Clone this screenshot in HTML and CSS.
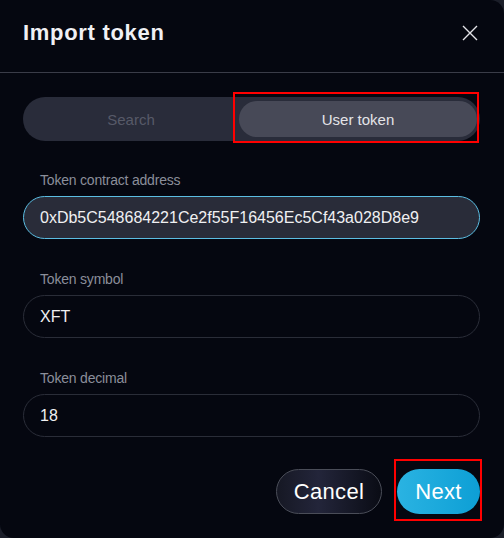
FILE: index.html
```html
<!DOCTYPE html>
<html>
<head>
<meta charset="utf-8">
<link rel="stylesheet" href="styles.css">
</head>
<body>
<div class="modal">
  <div class="header">
    <h1 class="title">Import token</h1>
    <svg class="close" width="16" height="16" viewBox="0 0 16 16"><path d="M1 1L15 15M15 1L1 15" stroke="#e4e4e8" stroke-width="1.4" fill="none"/></svg>
  </div>
  <div class="divider"></div>
  <div class="body">
    <div class="tabs">
      <div class="tab">Search</div>
      <div class="tab active">User token</div>
    </div>
    <div class="field first">
      <div class="label">Token contract address</div>
      <div class="input focused">0xDb5C548684221Ce2f55F16456Ec5Cf43a028D8e9</div>
    </div>
    <div class="field">
      <div class="label">Token symbol</div>
      <div class="input">XFT</div>
    </div>
    <div class="field">
      <div class="label">Token decimal</div>
      <div class="input">18</div>
    </div>
    <div class="actions">
      <div class="btn cancel">Cancel</div>
      <div class="btn next">Next</div>
    </div>
  </div>
  <div class="mark mark-tab"></div>
  <div class="mark mark-next"></div>
</div>
</body>
</html>
```
FILE: styles.css
```css
html, body {
  margin: 0;
  padding: 0;
  background: #1b1e29;
}
body {
  font-family: "Liberation Sans", Arial, sans-serif;
  width: 504px;
  height: 538px;
  overflow: hidden;
}
.modal {
  position: relative;
  width: 504px;
  height: 538px;
  background: #050710;
  border-radius: 0 14px 14px 14px;
  box-sizing: border-box;
  color: #e8e8ec;
}
.header {
  height: 66px;
  margin-bottom: 6px;
  padding: 0 26px 0 23px;
  display: flex;
  align-items: center;
  justify-content: space-between;
}
.title {
  margin: 0;
  font-size: 22px;
  line-height: 26px;
  font-weight: 700;
  letter-spacing: 0.7px;
  color: #f0f0f4;
}
.close { display: block; }
.divider {
  height: 1px;
  background: #3a3c48;
}
.body {
  padding: 24px 24px 0 23px;
}
.tabs {
  height: 44px;
  box-sizing: border-box;
  border-radius: 22px;
  background: #292c3a;
  display: grid;
  grid-template-columns: 216px 1fr;
  padding: 4px 3px 4px 0;
}
.tab {
  display: flex;
  align-items: center;
  justify-content: center;
  font-size: 15px;
  color: #575a68;
  border-radius: 18px;
}
.tab.active {
  background: #474957;
  color: #e4e4e8;
}
.field { margin-top: 31px; }
.field + .field { margin-top: 32px; }
.label {
  font-size: 14px;
  line-height: 17px;
  color: #8b8e9a;
  padding-left: 17px;
  letter-spacing: -0.2px;
  margin-bottom: 7px;
}
.input {
  height: 43px;
  box-sizing: border-box;
  border: 1px solid #2a2d38;
  border-radius: 22px;
  padding: 0 16px;
  display: flex;
  align-items: center;
  font-size: 16px;
  color: #f0f0f2;
}
.input.focused {
  background: #292c39;
  border-color: #5bbde2;
}
.actions {
  margin-top: 32px;
  display: flex;
  justify-content: flex-end;
  gap: 15px;
}
.btn {
  height: 45px;
  box-sizing: border-box;
  border-radius: 23px;
  display: flex;
  align-items: center;
  justify-content: center;
  font-size: 22px;
  letter-spacing: 0.3px;
  color: #ffffff;
}
.cancel {
  width: 106px;
  border: 1px solid #4a4d58;
  background: linear-gradient(90deg, #161824 0%, #23253a 40%, #0a0c15 100%);
}
.next {
  width: 83px;
  background: linear-gradient(90deg, #2ab3e2, #0d9fd5);
}
.mark {
  position: absolute;
  border: 2px solid #ff0000;
  box-sizing: border-box;
  pointer-events: none;
}
.mark-tab { left: 233px; top: 92px; width: 246px; height: 51px; }
.mark-next { left: 394px; top: 459px; width: 88px; height: 62px; }
```
